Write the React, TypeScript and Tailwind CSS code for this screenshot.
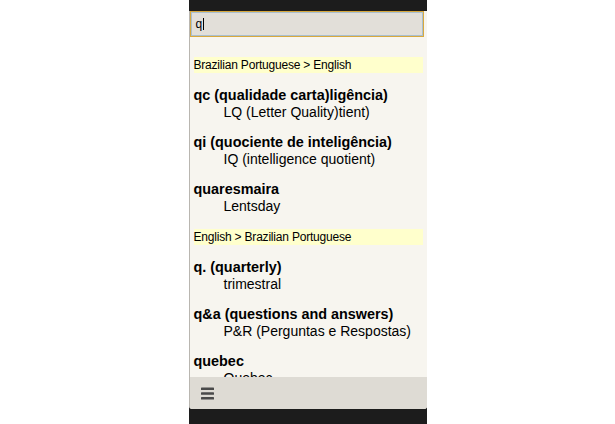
type Entry = { term: string; meaning: string }

const sections: { title: string; entries: Entry[] }[] = [
	{
		title: 'Brazilian Portuguese > English',
		entries: [
			{ term: 'qc (qualidade carta)ligência)', meaning: 'LQ (Letter Quality)tient)' },
			{ term: 'qi (quociente de inteligência)', meaning: 'IQ (intelligence quotient)' },
			{ term: 'quaresmaira', meaning: 'Lentsday' },
		],
	},
	{
		title: 'English > Brazilian Portuguese',
		entries: [
			{ term: 'q. (quarterly)', meaning: 'trimestral' },
			{ term: 'q&a (questions and answers)', meaning: 'P&R (Perguntas e Respostas)' },
			{ term: 'quebec', meaning: 'Quebec' },
		],
	},
]

export default function App() {
	return (
		<div className="flex h-[424px] w-full justify-center bg-white font-['Liberation_Sans',Arial,sans-serif] text-black">
			<div className="flex w-[238px] flex-col bg-[#1c1c1c]">
				<div className="h-[11px] shrink-0" />
				<div className="flex min-h-0 flex-1 flex-col overflow-hidden rounded-b-[3px] border-l border-[#b9b6b0] bg-[#f7f5ef]">
					<div className="mr-[3px] flex h-[26px] shrink-0 items-center border border-[#d8a93e] bg-[#e2dfd9] px-[5px] shadow-[inset_0_0_0_1px_#a9bfd0]">
						<span className="text-[12px] leading-none">q</span>
						<span className="ml-[1px] h-[12px] w-px bg-black" />
					</div>
					<div className="min-h-0 flex-1 overflow-hidden px-[4px] pt-[20px]">
						{sections.map(section => (
							<div key={section.title} className="mb-[14px]">
								<div className="h-[16px] bg-[#ffffcc] text-[12px] leading-[16px] tracking-[-0.2px]">
									{section.title}
								</div>
								<div className="flex flex-col gap-[13px] pt-[14px]">
									{section.entries.map(entry => (
										<div key={entry.term} className="flex flex-col">
											<strong className="text-[14.4px] leading-[17px] font-bold">{entry.term}</strong>
											<span className="pl-[30px] text-[14px] leading-[17px]">{entry.meaning}</span>
										</div>
									))}
								</div>
							</div>
						))}
					</div>
					<div className="flex h-[32px] shrink-0 items-center bg-[#dedbd4] pl-[11px]">
						<svg width="13" height="13" viewBox="0 0 13 13" fill="#4a4a4a">
							<rect x="0" y="0.5" width="13" height="2.6" rx="0.6" />
							<rect x="0" y="5.2" width="13" height="2.6" rx="0.6" />
							<rect x="0" y="9.9" width="13" height="2.6" rx="0.6" />
						</svg>
					</div>
				</div>
				<div className="h-[15px] shrink-0" />
			</div>
		</div>
	)
}
